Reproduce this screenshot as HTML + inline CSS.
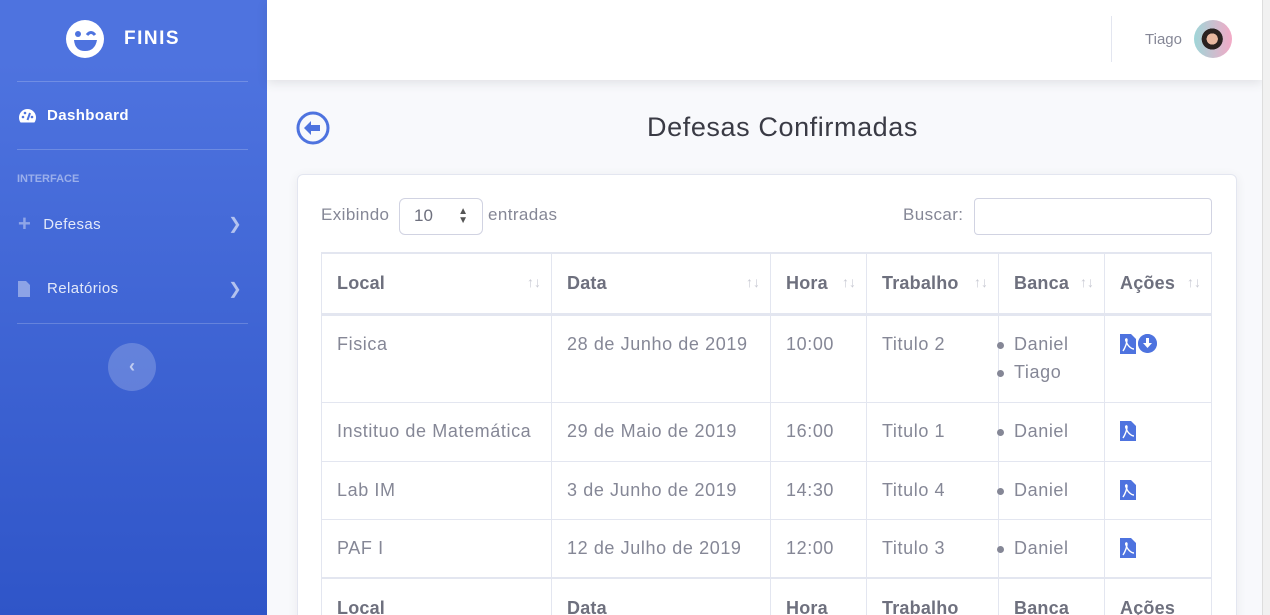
<!DOCTYPE html>
<html><head><meta charset="utf-8"><style>
*{box-sizing:border-box;margin:0;padding:0}
html,body{width:1270px;height:615px;overflow:hidden}
body{background:#f8f9fc;font-family:"Liberation Sans",sans-serif;color:#858796;position:relative}
.sb{position:absolute;left:0;top:0;width:267px;height:615px;background:linear-gradient(180deg,#4e73df 10%,#2f55c8 100%);color:#fff}
.brand{position:absolute;top:20px;left:66px;display:flex;align-items:center}
.brand b{font-size:19px;letter-spacing:1.5px;margin-left:20px}
.hr{position:absolute;left:17px;width:231px;height:1px;background:rgba(255,255,255,.2)}
.item{position:absolute;left:18px;font-size:15px;display:flex;align-items:center;width:230px;letter-spacing:.4px}
.item .chev{position:absolute;right:6px;font-size:16px;color:rgba(255,255,255,.6)}
.head{position:absolute;left:17px;top:173px;font-size:11px;font-weight:bold;color:rgba(255,255,255,.45)}
.tog{position:absolute;left:108px;top:343px;width:48px;height:48px;border-radius:50%;background:rgba(255,255,255,.2);color:rgba(255,255,255,.6);text-align:center;line-height:46px;font-size:18px;font-weight:bold}
.top{position:absolute;left:267px;top:0;width:995px;height:80px;background:#fff;box-shadow:0 3px 10px rgba(58,59,69,.12)}
.vr{position:absolute;left:844px;top:16px;width:1px;height:46px;background:#e3e6f0}
.user{position:absolute;left:878px;top:31px;font-size:15px;color:#858796}
.av{position:absolute;left:927px;top:20px;width:38px;height:38px;border-radius:50%;background:radial-gradient(circle at 48% 50%,#e8b8a0 0 20%,#2a2220 21% 38%,transparent 39%),linear-gradient(90deg,#9fd6d8,#f3a9c6)}
.scroll{position:absolute;left:1262px;top:0;width:8px;height:615px;background:#f1f1f1;border-left:1px solid #ddd}
h1{position:absolute;left:647px;top:112px;font-weight:normal;font-size:27px;color:#3a3b45;letter-spacing:.6px}
.card{position:absolute;left:297px;top:174px;width:940px;height:460px;background:#fff;border:1px solid #e3e6f0;border-radius:6px;box-shadow:0 2px 10px rgba(58,59,69,.08)}
.lbl{position:absolute;font-size:17px;color:#858796;letter-spacing:.4px}
.sel{position:absolute;left:399px;top:198px;width:84px;height:37px;border:1px solid #d1d3e2;border-radius:6px;font-size:17px;color:#6e707e;padding:7px 0 0 14px}
.inp{position:absolute;left:974px;top:198px;width:238px;height:37px;border:1px solid #d1d3e2;border-radius:4px}
table{position:absolute;left:321px;top:252px;border-collapse:collapse;font-size:18px;color:#858796;letter-spacing:.6px}
td,th{border:1px solid #e3e6f0;text-align:left;vertical-align:top;padding:0 15px}
th{color:#6e707e;height:61px;vertical-align:middle;position:relative;border-bottom:3px solid #e3e6f0;border-top:2px solid #e3e6f0;letter-spacing:.2px}
th span{position:absolute;right:10px;top:20px;font-size:14px;color:#c9cad3;letter-spacing:0;font-weight:normal}
td{padding-top:18px}
ul{list-style:none;margin-top:-4px}
li{position:relative;line-height:28px}
li:before{content:"";position:absolute;left:-17px;top:12px;width:7px;height:7px;border-radius:50%;background:#858796}
.dl{display:inline-block;width:19px;height:19px;border-radius:50%;background:#4e73df;vertical-align:top;margin-left:2px}
</style></head><body>
<div class="sb">
 <div class="brand"><svg width="38" height="38" viewBox="0 0 38 38"><circle cx="19" cy="19" r="19" fill="#fff"/><circle cx="12" cy="14" r="3" fill="#4e73df"/><path d="M21 15 q4 -5 8 0" stroke="#4e73df" stroke-width="3" fill="none"/><path d="M8 20 h23 q-2 11 -12 11 q-10 0 -11 -11z" fill="#4e73df"/></svg><b>FINIS</b></div>
 <div class="hr" style="top:81px"></div>
 <div class="item" style="top:107px;font-weight:bold"><svg width="19" height="16" viewBox="0 0 19 16" style="margin-right:10px"><path d="M9.5 1a8.5 8.5 0 0 0-8.5 8.5c0 2 .6 3.7 1.6 5h13.8c1-1.3 1.6-3 1.6-5A8.5 8.5 0 0 0 9.5 1z" fill="#fff"/><circle cx="5" cy="9" r="1.3" fill="#4e73df"/><circle cx="7" cy="5" r="1.3" fill="#4e73df"/><circle cx="14" cy="9" r="1.3" fill="#4e73df"/><path d="M9.5 12 L12 5" stroke="#4e73df" stroke-width="2"/></svg>Dashboard</div>
 <div class="hr" style="top:149px"></div>
 <div class="head">INTERFACE</div>
 <div class="item" style="top:211px;color:rgba(255,255,255,.85)"><span style="color:rgba(255,255,255,.4);font-size:22px;margin-right:12px;font-weight:bold">+</span>Defesas<span class="chev">&#10095;</span></div>
 <div class="item" style="top:280px;color:rgba(255,255,255,.85)"><svg width="12" height="16" style="margin-right:17px"><path d="M0 0h8l4 4v12H0z" fill="rgba(255,255,255,.4)"/></svg>Relatórios<span class="chev">&#10095;</span></div>
 <div class="hr" style="top:323px"></div>
 <div class="tog">&lsaquo;</div>
</div>
<div class="top"><div class="vr"></div><div class="user">Tiago</div><div class="av"></div></div>
<div class="scroll"></div>
<svg style="position:absolute;left:296px;top:111px" width="34" height="34" viewBox="0 0 34 34"><circle cx="17" cy="17" r="15" fill="none" stroke="#4e73df" stroke-width="3"/><path d="M8 17l7-7v4h9v6h-9v4z" fill="#4e73df"/></svg>
<h1>Defesas Confirmadas</h1>
<div class="card"></div>
<div class="lbl" style="left:321px;top:205px">Exibindo</div>
<div class="sel">10<span style="position:absolute;right:14px;top:8px;font-size:10px;line-height:9px;color:#555">&#9650;<br>&#9660;</span></div>
<div class="lbl" style="left:488px;top:205px">entradas</div>
<div class="lbl" style="left:903px;top:205px">Buscar:</div>
<div class="inp"></div>
<table>
<tr><th style="width:230px">Local<span>↑↓</span></th><th style="width:219px">Data<span>↑↓</span></th><th style="width:96px">Hora<span>↑↓</span></th><th style="width:132px">Trabalho<span>↑↓</span></th><th style="width:106px">Banca<span>↑↓</span></th><th style="width:107px">Ações<span>↑↓</span></th></tr>
<tr style="height:88px"><td>Fisica</td><td>28 de Junho de 2019</td><td>10:00</td><td>Titulo 2</td><td><ul><li>Daniel</li><li>Tiago</li></ul></td><td><svg width="16" height="20" viewBox="0 0 16 20" style="vertical-align:top"><path d="M0 0h11l5 5v15H0z" fill="#4e73df"/><path d="M3 17c2-3 4-8 4-11 0-2-2-1-1 1 1 4 5 8 8 8" stroke="#fff" stroke-width="1.4" fill="none"/></svg><svg class="dl" viewBox="0 0 19 19"><circle cx="9.5" cy="9.5" r="9.5" fill="#4e73df"/><path d="M8 4h3v5h3l-4.5 5L5 9h3z" fill="#fff"/></svg></td></tr>
<tr style="height:59px"><td>Instituo de Matemática</td><td>29 de Maio de 2019</td><td>16:00</td><td>Titulo 1</td><td><ul><li>Daniel</li></ul></td><td><svg width="16" height="20" viewBox="0 0 16 20"><path d="M0 0h11l5 5v15H0z" fill="#4e73df"/><path d="M3 17c2-3 4-8 4-11 0-2-2-1-1 1 1 4 5 8 8 8" stroke="#fff" stroke-width="1.4" fill="none"/></svg></td></tr>
<tr style="height:58px"><td>Lab IM</td><td>3 de Junho de 2019</td><td>14:30</td><td>Titulo 4</td><td><ul><li>Daniel</li></ul></td><td><svg width="16" height="20" viewBox="0 0 16 20"><path d="M0 0h11l5 5v15H0z" fill="#4e73df"/><path d="M3 17c2-3 4-8 4-11 0-2-2-1-1 1 1 4 5 8 8 8" stroke="#fff" stroke-width="1.4" fill="none"/></svg></td></tr>
<tr style="height:59px"><td>PAF I</td><td>12 de Julho de 2019</td><td>12:00</td><td>Titulo 3</td><td><ul><li>Daniel</li></ul></td><td><svg width="16" height="20" viewBox="0 0 16 20"><path d="M0 0h11l5 5v15H0z" fill="#4e73df"/><path d="M3 17c2-3 4-8 4-11 0-2-2-1-1 1 1 4 5 8 8 8" stroke="#fff" stroke-width="1.4" fill="none"/></svg></td></tr>
<tr><th>Local</th><th>Data</th><th>Hora</th><th>Trabalho</th><th>Banca</th><th>Ações</th></tr>
</table>
</body></html>
